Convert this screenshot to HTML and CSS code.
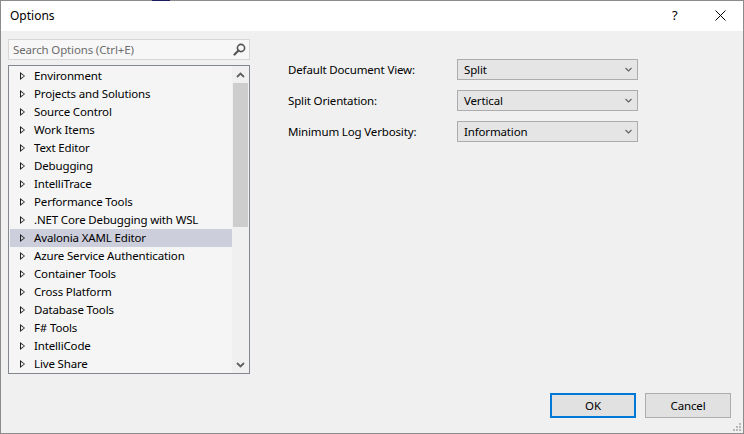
FILE: index.html
```html
<!DOCTYPE html>
<html>
<head>
<meta charset="utf-8">
<link rel="stylesheet" href="styles.css">
</head>
<body>
<div class="window">
  <div class="topline"><span class="topmark"></span></div>
  <div class="titlebar">
    <span class="title">Options</span>
    <span class="help">?</span>
    <span class="close"><svg width="11" height="11" viewBox="0 0 11 11"><path d="M0.5 0.5 L10.5 10.5 M10.5 0.5 L0.5 10.5" stroke="#000" stroke-width="1" fill="none"/></svg></span>
  </div>
  <div class="content">
    <div class="main">
      <div class="left">
        <div class="search">
          <span class="placeholder">Search Options (Ctrl+E)</span>
          <svg class="mag" width="13" height="13" viewBox="0 0 13 13"><circle cx="8" cy="5" r="3.6" fill="none" stroke="#555" stroke-width="1.6"/><path d="M5.5 7.5 L1.5 11.5" stroke="#555" stroke-width="2.2" stroke-linecap="round"/></svg>
        </div>
        <div class="tree">
          <div class="rows">
            <div class="row"><span class="arrow"></span>Environment</div>
            <div class="row"><span class="arrow"></span>Projects and Solutions</div>
            <div class="row"><span class="arrow"></span>Source Control</div>
            <div class="row"><span class="arrow"></span>Work Items</div>
            <div class="row"><span class="arrow"></span>Text Editor</div>
            <div class="row"><span class="arrow"></span>Debugging</div>
            <div class="row"><span class="arrow"></span>IntelliTrace</div>
            <div class="row"><span class="arrow"></span>Performance Tools</div>
            <div class="row"><span class="arrow"></span>.NET Core Debugging with WSL</div>
            <div class="row selected"><span class="arrow"></span>Avalonia XAML Editor</div>
            <div class="row"><span class="arrow"></span>Azure Service Authentication</div>
            <div class="row"><span class="arrow"></span>Container Tools</div>
            <div class="row"><span class="arrow"></span>Cross Platform</div>
            <div class="row"><span class="arrow"></span>Database Tools</div>
            <div class="row"><span class="arrow"></span>F# Tools</div>
            <div class="row"><span class="arrow"></span>IntelliCode</div>
            <div class="row"><span class="arrow"></span>Live Share</div>
          </div>
          <div class="scrollbar">
            <div class="sbtn"><svg width="9" height="6" viewBox="0 0 9 6"><path d="M1 5 L4.5 1.5 L8 5" stroke="#606060" stroke-width="1.8" fill="none"/></svg></div>
            <div class="thumb"></div>
            <div class="track"></div>
            <div class="sbtn"><svg width="9" height="6" viewBox="0 0 9 6"><path d="M1 1 L4.5 4.5 L8 1" stroke="#606060" stroke-width="1.8" fill="none"/></svg></div>
          </div>
        </div>
      </div>
      <div class="right">
        <div class="field">
          <span class="label">Default Document View:</span>
          <div class="combo"><span>Split</span><svg width="7" height="5" viewBox="0 0 7 5"><path d="M0.5 1 L3.5 4 L6.5 1" stroke="#606060" stroke-width="1.1" fill="none"/></svg></div>
        </div>
        <div class="field">
          <span class="label">Split Orientation:</span>
          <div class="combo"><span>Vertical</span><svg width="7" height="5" viewBox="0 0 7 5"><path d="M0.5 1 L3.5 4 L6.5 1" stroke="#606060" stroke-width="1.1" fill="none"/></svg></div>
        </div>
        <div class="field">
          <span class="label">Minimum Log Verbosity:</span>
          <div class="combo"><span>Information</span><svg width="7" height="5" viewBox="0 0 7 5"><path d="M0.5 1 L3.5 4 L6.5 1" stroke="#606060" stroke-width="1.1" fill="none"/></svg></div>
        </div>
      </div>
    </div>
    <div class="footer">
      <div class="btn default">OK</div>
      <div class="btn">Cancel</div>
    </div>
    <svg class="grip" width="9" height="9" viewBox="0 0 9 9" fill="#b8b8b8"><rect x="6" y="0" width="2" height="2"/><rect x="3" y="3" width="2" height="2"/><rect x="6" y="3" width="2" height="2"/><rect x="0" y="6" width="2" height="2"/><rect x="3" y="6" width="2" height="2"/><rect x="6" y="6" width="2" height="2"/></svg>
  </div>
</div>
</body>
</html>
```
FILE: styles.css
```css
html, body {
  margin: 0;
  padding: 0;
}
body {
  font-family: "Noto Sans", "Open Sans", sans-serif;
  font-size: 11.5px;
  letter-spacing: -0.15px;
  color: #000;
  background: #fff;
}
.window {
  width: 744px;
  height: 434px;
  box-sizing: border-box;
  border-left: 1px solid #8c8c8c;
  border-right: 1px solid #8c8c8c;
  border-bottom: 1px solid #8c8c8c;
  display: flex;
  flex-direction: column;
  background: #f0f0f0;
}
.topline {
  height: 1px;
  background: #8c8c8c;
  display: flex;
  margin: 0 -1px;
}
.topmark {
  margin-left: 152px;
  width: 18px;
  height: 1px;
  background: #1b1b5e;
}
.titlebar {
  height: 30px;
  background: #fff;
  display: flex;
  align-items: center;
  padding-left: 9px;
  flex-shrink: 0;
  font-size: 12px;
  letter-spacing: 0;
}
.title {
  flex: 1;
  line-height: 16px;
  padding-bottom: 1px;
}
.help {
  width: 14px;
  margin-right: 29px;
  font-size: 13px;
  padding-bottom: 2px;
}
.close {
  width: 11px;
  height: 11px;
  margin-right: 17px;
  display: flex;
  margin-bottom: 1px;
}
.content {
  flex: 1;
  display: flex;
  flex-direction: column;
  position: relative;
}
.main {
  flex: 1;
  display: flex;
  padding: 8px 0 0 7px;
}
.left {
  width: 242px;
  display: flex;
  flex-direction: column;
}
.search {
  height: 21px;
  box-sizing: border-box;
  border: 1px solid #d6d6d6;
  background: #f7f7f7;
  display: flex;
  align-items: center;
  padding-left: 4px;
  padding-right: 3px;
}
.placeholder {
  flex: 1;
  color: #6d6d6d;
}
.mag {
  display: block;
}
.tree {
  margin-top: 5px;
  height: 309px;
  box-sizing: border-box;
  border: 1px solid #828790;
  background: #f5f5f5;
  display: flex;
}
.rows {
  flex: 1;
  padding: 1px 0 0 1px;
  overflow: hidden;
}
.row {
  height: 18px;
  line-height: 18px;
  display: flex;
  align-items: center;
  white-space: nowrap;
}
.row.selected {
  background: #cccedb;
}
.arrow {
  width: 0;
  height: 0;
  border-left: 5px solid #1e1e1e;
  border-top: 4px solid transparent;
  border-bottom: 4px solid transparent;
  margin-left: 10px;
  margin-right: 9px;
  position: relative;
}
.arrow::after {
  content: "";
  position: absolute;
  left: -4px;
  top: -2px;
  border-left: 3px solid #f5f5f5;
  border-top: 2px solid transparent;
  border-bottom: 2px solid transparent;
}
.row.selected .arrow::after {
  border-left-color: #cccedb;
}
.scrollbar {
  width: 17px;
  background: #f0f0f0;
  display: flex;
  flex-direction: column;
}
.sbtn {
  height: 17px;
  display: flex;
  align-items: center;
  justify-content: center;
}
.thumb {
  height: 144px;
  margin: 0 1px;
  background: #cdcdcd;
}
.track {
  flex: 1;
}
.right {
  flex: 1;
  padding-left: 38px;
  padding-top: 20px;
  display: flex;
  flex-direction: column;
  gap: 10px;
}
.field {
  display: flex;
  align-items: center;
  height: 21px;
}
.label {
  width: 169px;
}
.combo {
  width: 181px;
  height: 21px;
  box-sizing: border-box;
  border: 1px solid #acacac;
  background: #e5e5e5;
  display: flex;
  align-items: center;
  padding: 0 5px 0 6px;
}
.combo span {
  flex: 1;
}
.footer {
  display: flex;
  justify-content: flex-end;
  gap: 9px;
  padding: 0 12px 15px 0;
}
.btn {
  width: 86px;
  height: 25px;
  box-sizing: border-box;
  border: 1px solid #adadad;
  background: #e1e1e1;
  display: flex;
  align-items: center;
  justify-content: center;
}
.btn.default {
  border: 2px solid #0078d7;
}
.grip {
  position: absolute;
  right: 1px;
  bottom: 1px;
}
```
